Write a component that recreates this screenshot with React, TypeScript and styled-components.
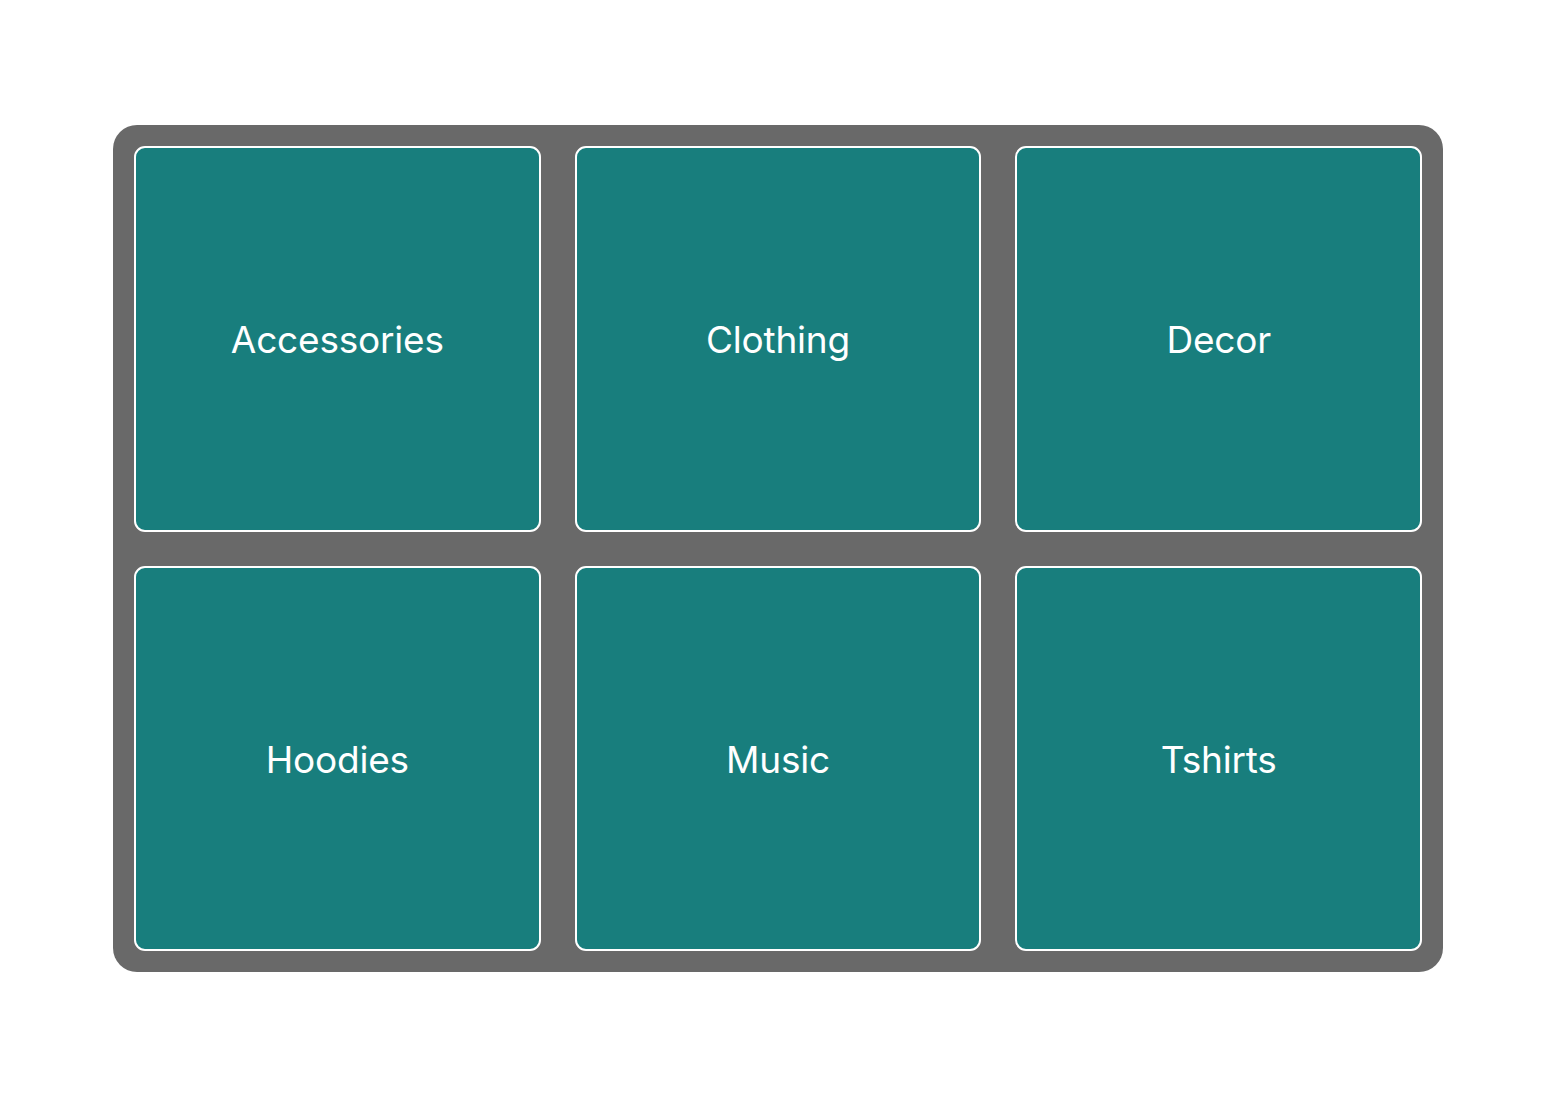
import styled, { createGlobalStyle } from "styled-components";

const GlobalStyle = createGlobalStyle`
  html, body {
    margin: 0;
    padding: 0;
    background: #ffffff;
    font-family: Inter, "Open Sans", sans-serif;
  }
`;

const Page = styled.div`
  display: flex;
  align-items: center;
  justify-content: center;
  width: 1558px;
  height: 1096px;
  padding: 1px 2px 0 0;
  box-sizing: border-box;
`;

const Board = styled.div`
  display: grid;
  grid-template-columns: repeat(3, 1fr);
  grid-template-rows: repeat(2, 1fr);
  gap: 34px;
  width: 1330px;
  height: 847px;
  padding: 21px;
  box-sizing: border-box;
  background: #696969;
  border-radius: 24px;
`;

const Tile = styled.div`
  display: flex;
  align-items: center;
  justify-content: center;
  background: #187e7d;
  border: 2px solid #ffffff;
  border-radius: 11px;
  box-sizing: border-box;
  color: #ffffff;
  font-size: 37px;
  font-weight: 400;
  letter-spacing: -0.2px;
  padding-top: 2px;
`;

const categories = ["Accessories", "Clothing", "Decor", "Hoodies", "Music", "Tshirts"];

export default function App() {
  return (
    <>
      <GlobalStyle />
      <Page>
        <Board>
          {categories.map((name) => (
            <Tile key={name}>{name}</Tile>
          ))}
        </Board>
      </Page>
    </>
  );
}
